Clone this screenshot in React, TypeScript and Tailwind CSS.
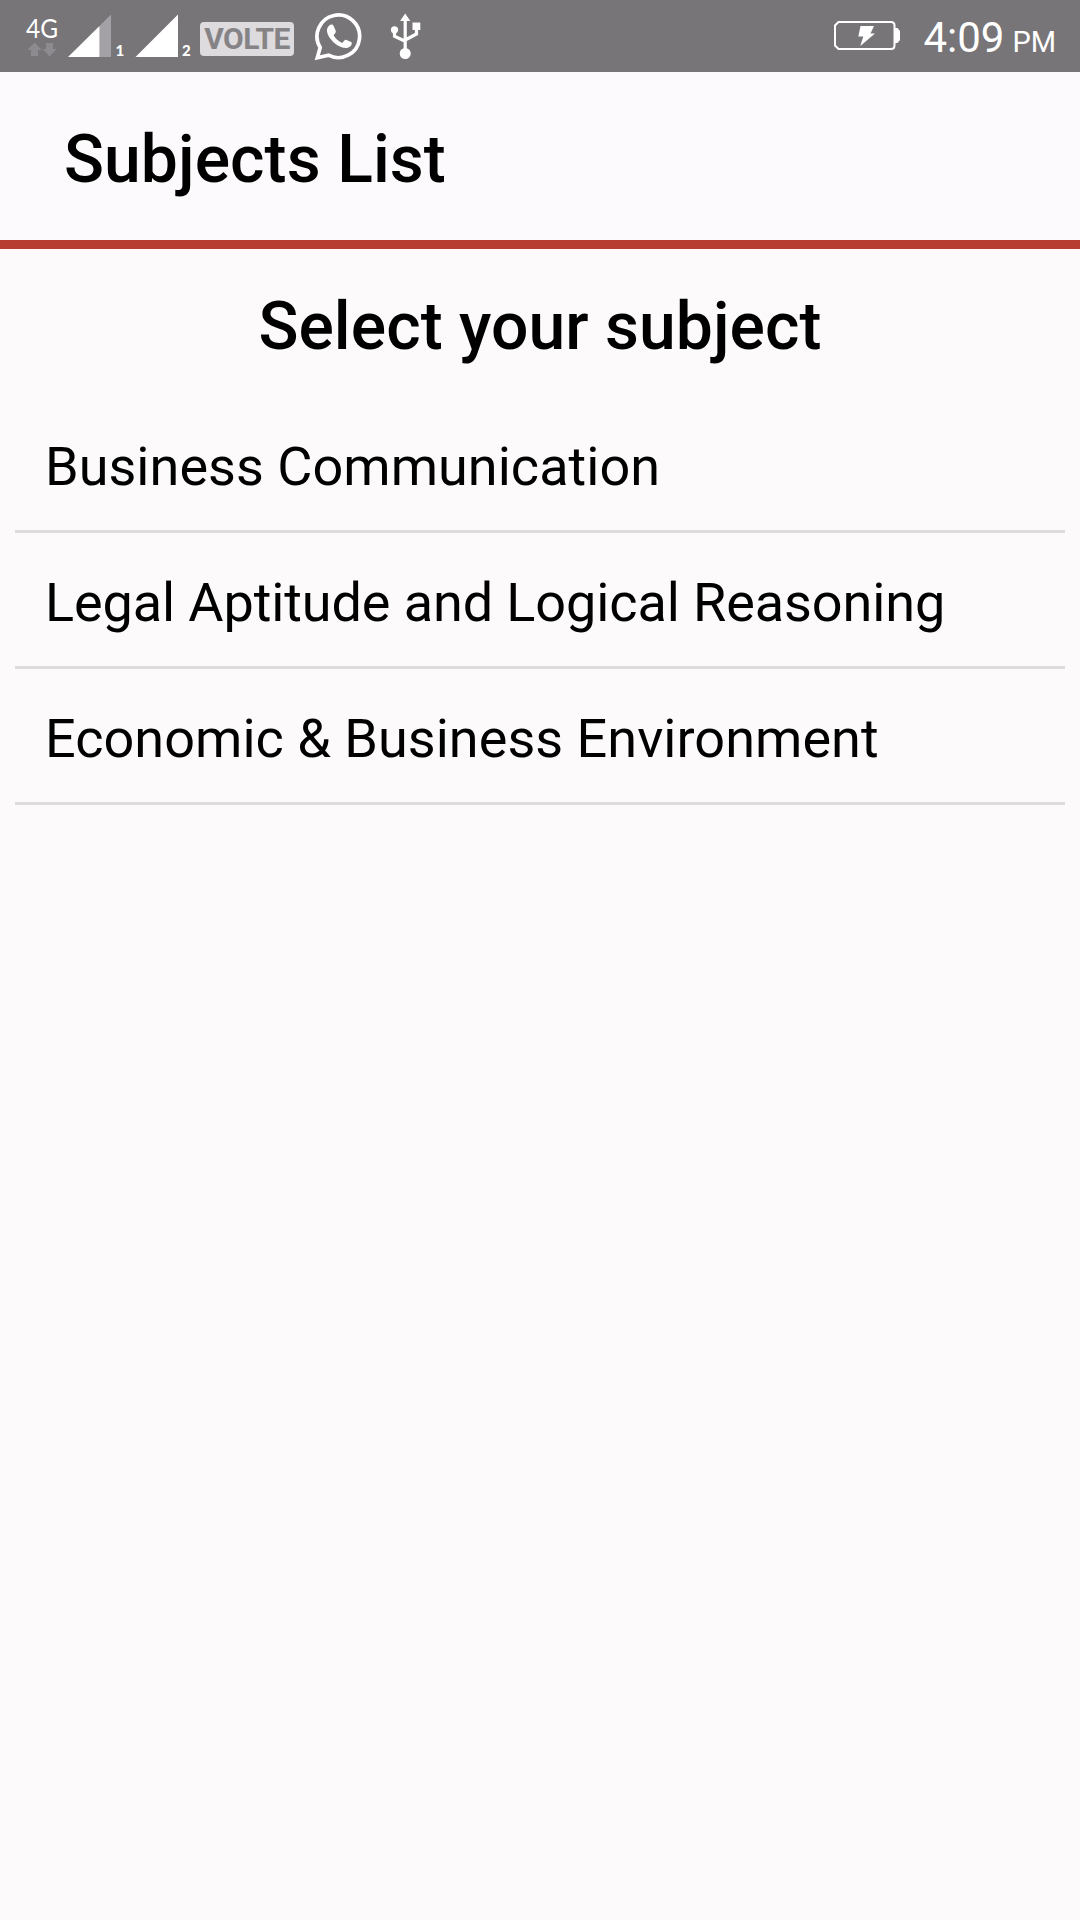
const subjects = [
  { name: "Business Communication", tracking: "tracking-[0.03px]" },
  { name: "Legal Aptitude and Logical Reasoning", tracking: "tracking-[-0.1px]" },
  { name: "Economic & Business Environment", tracking: "tracking-[0.03px]" },
];

function NetworkType() {
  return (
    <svg className="h-[72px] w-[36px] overflow-visible" viewBox="24 0 36 72">
      <text x="26" y="37.5" fontFamily="Lato, sans-serif" fontSize="27.5" fill="#fff" textLength="32" lengthAdjust="spacingAndGlyphs">4G</text>
      <g fill="#8d8b8f">
        <path d="M34.500 42.500 42 50h-4v6h-7v-6H27.500z" />
        <path d="M49.500 56.500 42.500 49h3.500v-6h7v6h3.500z" />
      </g>
    </svg>
  );
}

function SignalOne() {
  return (
    <svg className="h-[72px] w-[58px]" viewBox="67 0 58 72">
      <path d="M99.500 26 111 14.500V57H99.500z" fill="#a3a1a5" />
      <path d="M68 57 99.500 26V57z" fill="#fff" />
      <text x="115.500" y="56" fontFamily="Lato, sans-serif" fontWeight="900" fontSize="15" fill="#fff">1</text>
    </svg>
  );
}

function SignalTwo() {
  return (
    <svg className="h-[72px] w-[58px]" viewBox="135 0 58 72">
      <path d="M135.500 57 178 14.500V57z" fill="#fff" />
      <text x="182" y="56" fontFamily="Lato, sans-serif" fontWeight="900" fontSize="15" fill="#fff">2</text>
    </svg>
  );
}

function WhatsApp() {
  return (
    <svg className="h-[72px] w-[50px]" viewBox="313 0 50 72" fill="none">
      <path d="M316.300 57.700 319.200 47.500A21.300 21.300 0 1 1 327.500 55.200z" stroke="#fff" strokeWidth="3.700" />
      <path
        d="M328.500 25.200c1.500-1 3.400-.7 4.100.9l2.100 4.700c.3.800.1 1.600-.4 2.200l-1.700 2.200c2 3.500 4.700 6 8.600 7.700l2.400-2.600c.5-.6 1.200-.7 1.900-.4l4.600 2.200c.6.300.8.700.7 1.400-.4 3-3.400 4.600-6.200 4.500-8.500-.6-17.600-9.800-18.600-16.600-.3-2.500.7-4.800 2.500-6.200z"
        fill="#fff"
      />
    </svg>
  );
}

function Usb() {
  return (
    <svg className="h-[72px] w-[32px]" viewBox="390 0 32 72" fill="#fff">
      <path d="M405.200 13.500 410.300 21h-10.200z" />
      <circle cx="394.500" cy="29.800" r="3.600" />
      <path d="M412.500 22.500h7.800v7.500h-7.800z" />
      <circle cx="405.200" cy="53.500" r="5.500" />
      <path d="M405.200 20v32M394.500 30v6.200l10.700 5M416.500 28v6l-11.300 6" fill="none" stroke="#fff" strokeWidth="3.200" />
    </svg>
  );
}

function Battery() {
  return (
    <svg className="h-[72px] w-[68px]" viewBox="833 0 68 72">
      <path d="M838.500 22H891q3.500 0 3.500 3.500v20q0 3.500-3.500 3.500H838.500L835 45.500v-20z" fill="none" stroke="#fff" strokeWidth="2" />
      <path d="M895 28h2.500l2.500 3v9l-2.500 3H895z" fill="#fff" />
      <path d="M860.500 26h13.500l-3.500 7.500h4.500L860.300 46l3-9.500h-5z" fill="#fff" />
    </svg>
  );
}

function StatusBar() {
  return (
    <div className="flex h-[72px] items-center justify-between bg-[#777578] pr-[24px] pl-[24px] text-white">
      <div className="flex items-center">
        <NetworkType />
        <div className="w-[7px]" />
        <SignalOne />
        <div className="w-[10px]" />
        <SignalTwo />
        <div className="mt-[6px] ml-[7px] flex h-[34px] w-[94px] items-center justify-center rounded-[4px] bg-[#dddbde]">
          <span className="text-[30px] leading-[34px] font-bold tracking-[-0.6px] text-[#858386]">VOLTE</span>
        </div>
        <div className="ml-[20px] flex gap-[26px]">
          <WhatsApp />
          <Usb />
        </div>
      </div>
      <div className="flex items-center">
        <Battery />
        <div className="ml-[22px] flex items-baseline gap-[8px] pt-[3px] leading-none">
          <span className="text-[42px]">4:09</span>
          <span className="text-[29px]">PM</span>
        </div>
      </div>
    </div>
  );
}

export default function App() {
  return (
    <div className="flex h-[1920px] w-[1080px] flex-col overflow-hidden bg-[#fcfafb] font-['Roboto',sans-serif] text-black">
      <StatusBar />
      <header className="flex h-[177px] items-center border-b-[9px] border-[#b73d30] bg-[#fcfafd] pt-[7px] pl-[64px]">
        <h1 className="text-[66px] leading-none font-medium tracking-[0.08px]">Subjects List</h1>
      </header>
      <main>
        <h2 className="flex h-[148px] items-center justify-center pt-[7px] text-[66px] leading-none font-medium tracking-[0.05px]">
          Select your subject
        </h2>
        <ul className="px-[15px]">
          {subjects.map(({ name, tracking }) => (
            <li
              key={name}
              className={`flex h-[136px] items-center border-b-[3px] border-[#dddbdc] pt-[6px] pl-[30px] text-[54px] leading-none whitespace-nowrap ${tracking}`}
            >
              {name}
            </li>
          ))}
        </ul>
      </main>
    </div>
  );
}
